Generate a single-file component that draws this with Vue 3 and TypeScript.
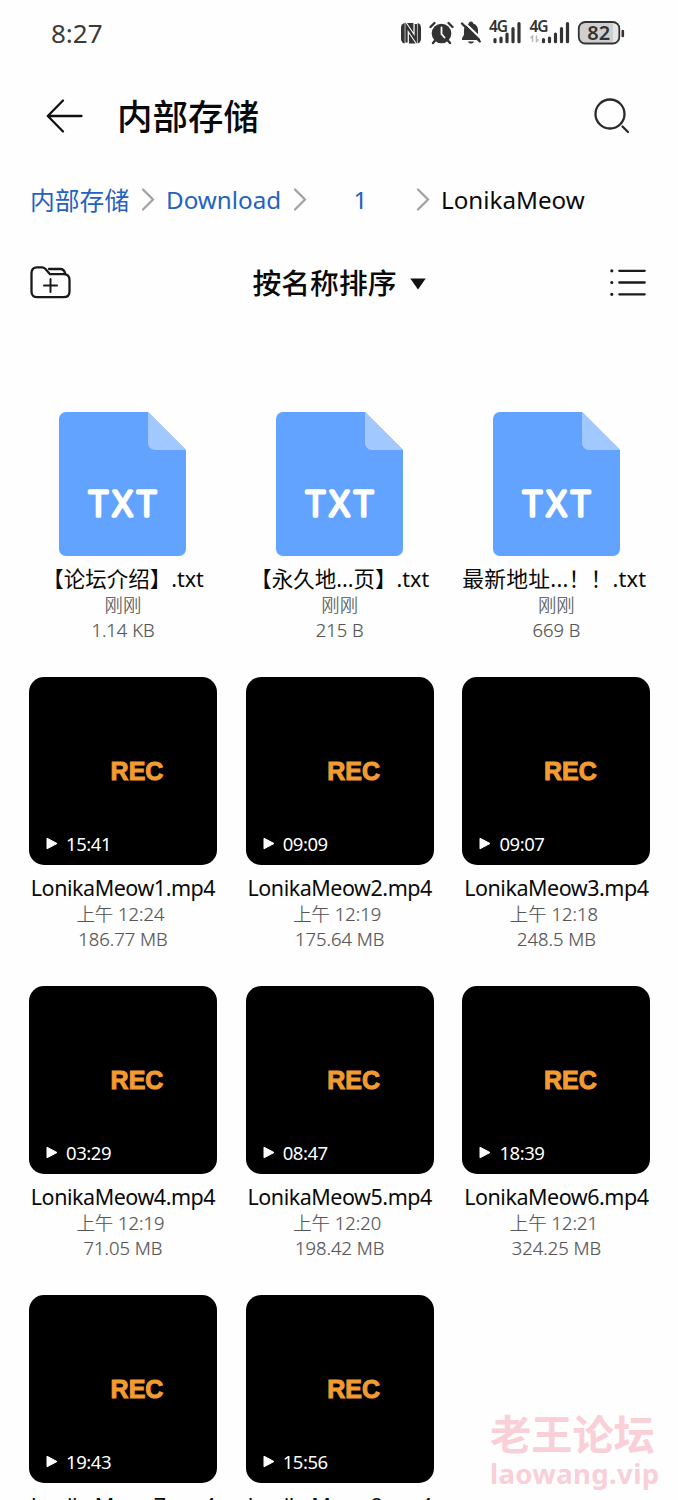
<script setup lang="ts">
interface FileItem {
  kind: 'txt' | 'video'
  name: string
  time: string
  size: string
  duration?: string
}

const files: FileItem[] = [
  { kind: 'txt', name: '【论坛介绍】.txt', time: '刚刚', size: '1.14 KB' },
  { kind: 'txt', name: '【永久地...页】.txt', time: '刚刚', size: '215 B' },
  { kind: 'txt', name: '最新地址...！！.txt', time: '刚刚', size: '669 B' },
  { kind: 'video', name: 'LonikaMeow1.mp4', time: '上午 12:24', size: '186.77 MB', duration: '15:41' },
  { kind: 'video', name: 'LonikaMeow2.mp4', time: '上午 12:19', size: '175.64 MB', duration: '09:09' },
  { kind: 'video', name: 'LonikaMeow3.mp4', time: '上午 12:18', size: '248.5 MB', duration: '09:07' },
  { kind: 'video', name: 'LonikaMeow4.mp4', time: '上午 12:19', size: '71.05 MB', duration: '03:29' },
  { kind: 'video', name: 'LonikaMeow5.mp4', time: '上午 12:20', size: '198.42 MB', duration: '08:47' },
  { kind: 'video', name: 'LonikaMeow6.mp4', time: '上午 12:21', size: '324.25 MB', duration: '18:39' },
  { kind: 'video', name: 'LonikaMeow7.mp4', time: '', size: '', duration: '19:43' },
  { kind: 'video', name: 'LonikaMeow8.mp4', time: '', size: '', duration: '15:56' },
]
</script>

<template>
  <div class="screen">
    <div class="status">
      <span class="clock">8:27</span>
      <svg class="indicators" width="228" height="30" viewBox="0 0 228 30">
        <g fill="#333">
          <rect x="1" y="5" width="20" height="20.500" rx="4.500" />
          <path d="M6.800 26V8.500L15.500 21.500V4" fill="none" stroke="#fff" stroke-width="4.200" />
          <path d="M6.500 24.500V8L15.800 22V6" fill="none" stroke="#333" stroke-width="2.300" />
        </g>
        <g>
          <circle cx="41.500" cy="15.500" r="9.800" fill="#333" />
          <path d="M30.500 9l4-4M52.500 9l-4-4M35.500 22l-2.500 3M47.500 22l2.500 3" stroke="#333" stroke-width="2.400" stroke-linecap="round" />
          <path d="M41.500 9.500v6.500l3 3.500" fill="none" stroke="#fff" stroke-width="1.800" stroke-linecap="round" />
        </g>
        <g>
          <path d="M71 3.500c1.500 0 2 .9 2.200 1.900 3.200 1 4.800 3.600 4.800 6.800v4.500l2 3.500v1.800H62v-1.800l2-3.500v-4.500c0-3.200 1.600-5.800 4.800-6.800.2-1 .7-1.900 2.200-1.900zM68 23.500h6c-.5 1.400-1.600 2-3 2s-2.500-.6-3-2z" fill="#333" />
          <path d="M63.500 3.500L82 21.500" stroke="#fff" stroke-width="2" />
          <path d="M62 5.500L79.800 23.500" stroke="#333" stroke-width="2.400" stroke-linecap="round" />
        </g>
        <g stroke="#333" stroke-width="3.200" stroke-linecap="round">
          <path d="M95 21.500v2.200M101 20v3.700M107 16v7.700M113 10.500v13.200M119 5.500v18.200" />
          <path d="M143.500 21.500v2.200M149.500 20v3.700M155.500 16v7.700M161.500 10.500v13.200M167.500 5.500v18.200" />
        </g>
        <text x="89" y="14" class="net">4G</text>
        <text x="129.500" y="14" class="net">4G</text>
        <path d="M132.500 24v-6l-2 2M136.500 17.500v6l2-2" fill="none" stroke="#bbb" stroke-width="1.500" />
        <rect x="178" y="4" width="41.500" height="21.500" rx="6.500" fill="#e6e6e6" />
        <path d="M184.500 5H213v19.500H184.500a5 5 0 0 1-5-5V10a5 5 0 0 1 5-5z" fill="#cfcfcf" />
        <rect x="178.800" y="4" width="40.500" height="21.500" rx="6.500" fill="none" stroke="#333" stroke-width="1.800" />
        <path d="M222.800 13v5" stroke="#333" stroke-width="2.600" stroke-linecap="round" />
        <text x="198.700" y="21.800" text-anchor="middle" class="battery">82</text>
      </svg>
    </div>

    <header class="header">
      <svg class="back" width="38" height="36" viewBox="0 0 38 36" fill="none" stroke="#111" stroke-width="2.300" stroke-linecap="round" stroke-linejoin="round">
        <path d="M17 2.500L1.800 18L17 33.500M1.800 18H35.500" />
      </svg>
      <h1 class="title">内部存储</h1>
      <svg class="search" width="38" height="38" viewBox="0 0 38 38" fill="none" stroke="#2a2a2a" stroke-width="2.300" stroke-linecap="round">
        <circle cx="17" cy="17" r="14.500" />
        <path d="M29.500 29.500L35 35" />
      </svg>
    </header>

    <nav class="crumbs">
      <a class="crumb root">内部存储</a>
      <svg class="sep" width="14" height="24" viewBox="0 0 14 24"><path d="M2 1.500l10 10L2 21.500" /></svg>
      <a class="crumb download">Download</a>
      <svg class="sep" width="14" height="24" viewBox="0 0 14 24"><path d="M2 1.500l10 10L2 21.500" /></svg>
      <a class="crumb one">1</a>
      <svg class="sep" width="14" height="24" viewBox="0 0 14 24"><path d="M2 1.500l10 10L2 21.500" /></svg>
      <span class="crumb current">LonikaMeow</span>
    </nav>

    <div class="toolbar">
      <svg width="42" height="36" viewBox="0 0 42 36" fill="none" stroke="#1a1a1a" stroke-width="2.300" stroke-linecap="round" stroke-linejoin="round">
        <path d="M8 2.300H13C14.500 2.300 15.500 3 16.500 4.100L21 9.200H34.500C38.300 9.200 40.500 11.500 40.500 15V26.500C40.500 30 38.300 32.200 34.500 32.200H8C4.500 32.200 2.500 30 2.500 26.500V8C2.500 4.500 4.500 2.300 8 2.300Z" />
        <path d="M20 4H31.500C34 4 35.500 5.600 36.300 9" />
        <path d="M21.500 14v13M15 20.500h13" stroke-width="2" />
      </svg>
      <div class="sort">
        <span class="sort-label">按名称排序</span>
        <svg class="caret" width="16" height="12" viewBox="0 0 16 12"><path d="M.3.500H15.700L8 11.500z" fill="#111" /></svg>
      </div>
      <svg width="38" height="30" viewBox="0 0 38 30" stroke="#1a1a1a" stroke-width="2.300" stroke-linecap="round">
        <path d="M10.300 2.800H35.700M10.300 14.500H35.700M10.300 26.300H35.700" />
        <path d="M2.800 2.800h.01M2.800 14.500h.01M2.800 26.300h.01" stroke-width="3.200" />
      </svg>
    </div>

    <main class="grid">
      <article v-for="file in files" :key="file.name" class="item">
        <div v-if="file.kind === 'txt'" class="doc">
          <svg width="127.400" height="144" viewBox="0 0 127.400 144">
            <path d="M7 0H89L127 38V137a7 7 0 0 1-7 7H7a7 7 0 0 1-7-7V7a7 7 0 0 1 7-7z" fill="#62a3ff" />
            <path d="M89 0L127 38H96a7 7 0 0 1-7-7z" fill="#a1c8ff" />
            <text x="66.200" y="104" text-anchor="middle" class="doc-label">TXT</text>
          </svg>
        </div>
        <div v-else class="thumb">
          <span class="rec">REC</span>
          <div class="duration">
            <svg width="12" height="13" viewBox="0 0 12 13"><path d="M1 1.200L11 6.500L1 11.800z" fill="#fff" stroke="#fff" stroke-linejoin="round" /></svg>
            <span>{{ file.duration }}</span>
          </div>
        </div>
        <div class="name" :class="file.kind">{{ file.name }}</div>
        <div class="meta time" :class="file.kind">{{ file.time }}</div>
        <div class="meta">{{ file.size }}</div>
      </article>
    </main>

    <div class="watermark">
      <div class="mark-name">老王论坛</div>
      <div class="mark-url">laowang.vip</div>
    </div>
  </div>
</template>

<style>
body {
  margin: 0;
  background: #fefefe;
}
</style>

<style scoped>
.screen {
  position: relative;
  width: 678px;
  height: 1500px;
  overflow: hidden;
  background: #fefefe;
  color: #0a0a0a;
  font-family: "Noto Sans", "Noto Sans CJK SC", sans-serif;
}

.status {
  display: flex;
  justify-content: space-between;
  align-items: center;
  height: 67px;
  padding: 0 50px 0 51px;
  box-sizing: border-box;
}

.clock {
  margin-top: -1px;
  font-size: 26px;
  color: #3a3a3a;
}

.indicators {
  margin-top: -2px;
  overflow: visible;
}

.net {
  font: 600 15.500px "Noto Sans", sans-serif;
  fill: #333;
  letter-spacing: -1.200px;
}

.battery {
  font: 600 20px "Noto Sans", sans-serif;
  fill: #333;
}

.header {
  display: flex;
  align-items: center;
  height: 98px;
  padding: 0 47px 0 46px;
}

.title {
  flex: 1;
  margin: -2px 0 0 33px;
  font-size: 35.500px;
  font-weight: 500;
  line-height: 52px;
  font-family: "Noto Sans CJK SC", sans-serif;
}

.crumbs {
  display: grid;
  grid-template-columns: 111px 25px 127px 18px 105px 26px auto;
  align-items: center;
  height: 70px;
  padding-left: 30px;
  white-space: nowrap;
}

.crumb {
  margin-top: -1px;
  font-size: 24.200px;
  color: #2362c0;
}

.root {
  margin-top: -3px;
  font-size: 24.800px;
}

.one {
  padding-right: 6px;
  text-align: center;
}

.current {
  margin-left: -1px;
  color: #0a0a0a;
}

.sep path {
  fill: none;
  stroke: #a0a0a0;
  stroke-width: 2.200;
  stroke-linecap: round;
}

.toolbar {
  display: flex;
  align-items: center;
  justify-content: space-between;
  height: 96px;
  padding: 0 31px 0 29px;
}

.sort {
  display: flex;
  align-items: center;
  gap: 13px;
  margin: -2px 2px 0 0;
}

.caret {
  margin-top: 4px;
}

.sort-label {
  font: 500 28.800px/42px "Noto Sans CJK SC", sans-serif;
}

.grid {
  display: grid;
  grid-template-columns: repeat(3, 188px);
  grid-auto-rows: 309px;
  column-gap: 28.700px;
  padding: 37px 0 0 29px;
}

.item {
  text-align: center;
  white-space: nowrap;
}

.doc {
  display: flex;
  justify-content: center;
  align-items: flex-end;
  height: 188px;
}

.doc-label {
  font: 300 34.500px "Noto Sans", sans-serif;
  fill: #fff;
  stroke: #fff;
  stroke-width: 3.400;
  stroke-linejoin: round;
  letter-spacing: 5.500px;
}

.thumb {
  display: flex;
  flex-direction: column;
  justify-content: flex-end;
  height: 188px;
  border-radius: 15px;
  background: #000;
}

.rec {
  margin: 0 0 45px 28px;
  color: #f29b31;
  font: 700 25px/30px "Liberation Sans", Arial, sans-serif;
  -webkit-text-stroke: 1px #f29b31;
}

.duration {
  display: flex;
  align-items: center;
  gap: 8px;
  height: 24px;
  padding-left: 17px;
  margin-bottom: 10px;
  color: #fff;
  font-size: 18.500px;
  letter-spacing: -0.450px;
}

.name {
  display: flex;
  justify-content: center;
  height: 30px;
  margin-top: 8px;
  font-size: 21.500px;
  line-height: 30px;
}

.name.video {
  letter-spacing: -0.470px;
}

.item:nth-child(3) .name {
  padding-right: 4px;
  font-size: 21.800px;
  letter-spacing: 0.200px;
}

.meta {
  height: 25px;
  color: #565656;
  font-size: 18.400px;
  line-height: 25px;
  font-weight: 300;
  -webkit-text-stroke: 0.200px #565656;
}

.time {
  margin-top: -2px;
}

.time.video {
  padding-right: 5px;
}

.watermark {
  position: absolute;
  left: 490px;
  top: 1408px;
  color: #f9cfd8;
  white-space: nowrap;
}

.mark-name {
  font: 700 41.200px/48px "Noto Sans CJK SC", sans-serif;
}

.mark-url {
  margin-top: 2px;
  font: 700 27.500px/32px "Noto Sans", sans-serif;
  letter-spacing: 0.350px;
}
</style>
